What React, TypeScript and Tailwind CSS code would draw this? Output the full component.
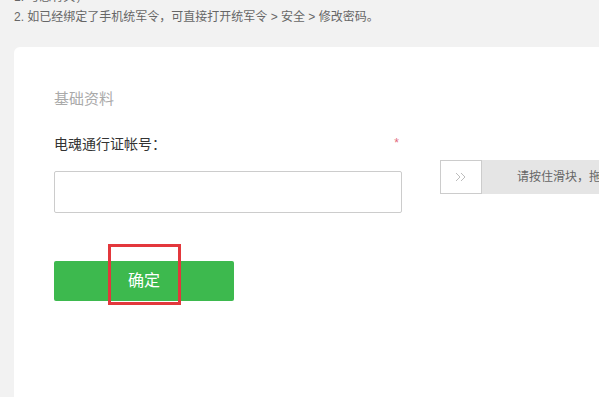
import React from 'react';

const font = { fontFamily: '"Liberation Sans", "Noto Sans CJK SC", sans-serif' };

const App: React.FC = () => {
  return (
    <div className="w-[599px] h-[397px] overflow-hidden bg-[#f2f2f2] text-[#666]" style={font}>
      {/* Notes */}
      <div className="pl-[14px] -mt-[13px] text-[12px] leading-[20px] text-[#666]">
        <p>1. 与您有关；</p>
        <p>2. 如已经绑定了手机统军令，可直接打开统军令 &gt; 安全 &gt; 修改密码。</p>
      </div>

      {/* Card */}
      <div className="ml-[14px] mt-[20px] h-[400px] w-[700px] bg-white rounded-tl-[6px] pl-[40px] pt-[42px]">
        <h3 className="text-[15px] leading-[20px] text-[#aaa]">基础资料</h3>

        <div className="flex items-start mt-[23px]">
          <div className="w-[348px] shrink-0">
            <div className="flex justify-between items-center h-[24px]">
              <span className="text-[14px] text-[#333]">电魂通行证帐号：</span>
              <span className="text-[12px] text-[#e26a7c] mr-[3px] -mt-[3px]">*</span>
            </div>
            <input
              type="text"
              className="mt-[15px] block w-[348px] h-[42px] border border-[#ccc] rounded-[2px] outline-none px-2"
            />
          </div>

          {/* slider captcha */}
          <div className="ml-[38px] mt-[28px] flex shrink-0 h-[34px] w-[260px] bg-[#e5e5e5]">
            <div className="w-[42px] h-[34px] shrink-0 bg-white border border-[#ccc] flex items-center justify-center">
              <svg width="12" height="10" viewBox="0 0 12 10" fill="none" stroke="#bdbdbd" strokeWidth="1">
                <path d="M1 1l4 4-4 4" />
                <path d="M6 1l4 4-4 4" />
              </svg>
            </div>
            <div className="pl-[35px] flex items-center text-[12px] text-[#666] whitespace-nowrap">
              请按住滑块，拖动到最右边
            </div>
          </div>
        </div>

        <div className="relative mt-[48px] w-[180px]">
          <button className="w-[180px] h-[40px] bg-[#3db94e] rounded-[2px] text-white text-[16px]">
            确定
          </button>
          <div className="absolute left-[54px] top-[-17px] w-[73px] h-[61px] border-[3px] border-[#e3373c] pointer-events-none" />
        </div>
      </div>
    </div>
  );
};

export default App;
